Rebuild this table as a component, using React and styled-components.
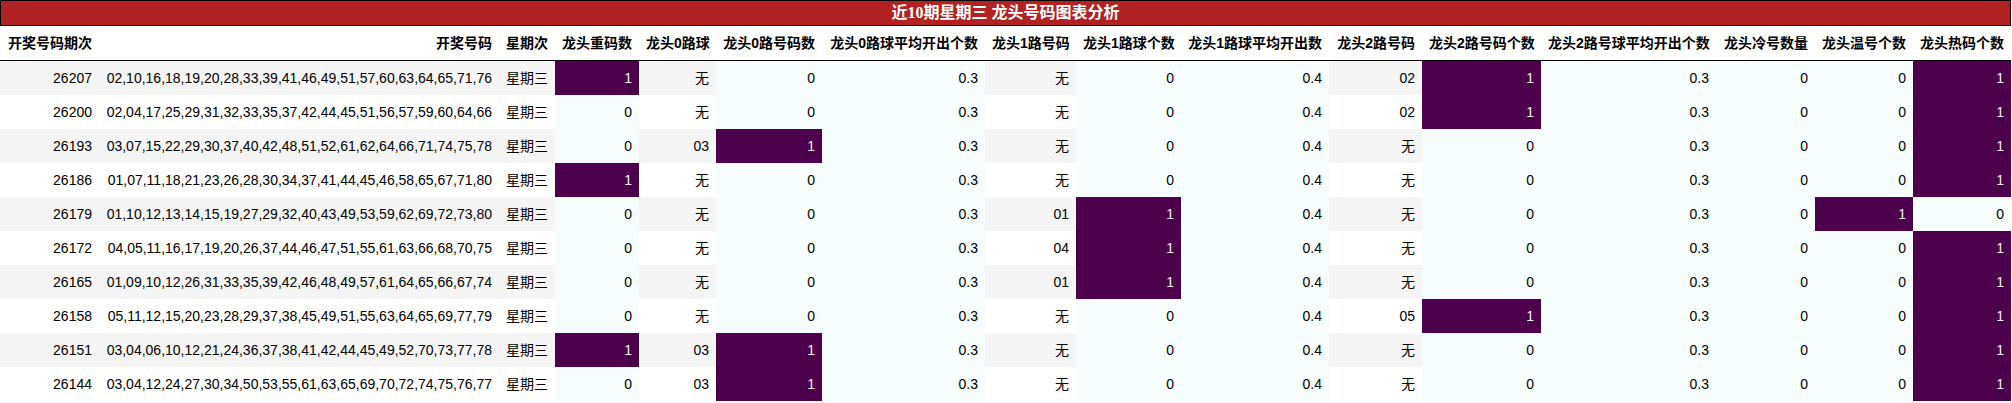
import React from "react";
import styled, { createGlobalStyle } from "styled-components";

const GlobalStyle = createGlobalStyle`
  html, body {
    margin: 0;
    padding: 0;
    background: #ffffff;
  }
  body {
    font-family: "Liberation Sans", "Noto Sans CJK SC", sans-serif;
  }
`;

// BuPu colour scale, low -> high
const BUPU = [
  "#f7fcfd", "#e0ecf4", "#bfd3e6", "#9ebcda", "#8c96c6",
  "#8c6bb1", "#88419d", "#810f7c", "#4d004b",
];

const columns = [
  { title: "开奖号码期次", width: 99 },
  { title: "开奖号码", width: 400 },
  { title: "星期次", width: 56 },
  { title: "龙头重码数", width: 84, grad: true },
  { title: "龙头0路球", width: 77 },
  { title: "龙头0路号码数", width: 106, grad: true },
  { title: "龙头0路球平均开出个数", width: 163, grad: true },
  { title: "龙头1路号码", width: 91 },
  { title: "龙头1路球个数", width: 105, grad: true },
  { title: "龙头1路球平均开出数", width: 148, grad: true },
  { title: "龙头2路号码", width: 93 },
  { title: "龙头2路号码个数", width: 119, grad: true },
  { title: "龙头2路号球平均开出个数", width: 175, grad: true },
  { title: "龙头冷号数量", width: 99, grad: true },
  { title: "龙头温号个数", width: 98, grad: true },
  { title: "龙头热码个数", width: 98, grad: true },
];

const rows = [
  ["26207", "02,10,16,18,19,20,28,33,39,41,46,49,51,57,60,63,64,65,71,76", "星期三", 1, "无", 0, 0.3, "无", 0, 0.4, "02", 1, 0.3, 0, 0, 1],
  ["26200", "02,04,17,25,29,31,32,33,35,37,42,44,45,51,56,57,59,60,64,66", "星期三", 0, "无", 0, 0.3, "无", 0, 0.4, "02", 1, 0.3, 0, 0, 1],
  ["26193", "03,07,15,22,29,30,37,40,42,48,51,52,61,62,64,66,71,74,75,78", "星期三", 0, "03", 1, 0.3, "无", 0, 0.4, "无", 0, 0.3, 0, 0, 1],
  ["26186", "01,07,11,18,21,23,26,28,30,34,37,41,44,45,46,58,65,67,71,80", "星期三", 1, "无", 0, 0.3, "无", 0, 0.4, "无", 0, 0.3, 0, 0, 1],
  ["26179", "01,10,12,13,14,15,19,27,29,32,40,43,49,53,59,62,69,72,73,80", "星期三", 0, "无", 0, 0.3, "01", 1, 0.4, "无", 0, 0.3, 0, 1, 0],
  ["26172", "04,05,11,16,17,19,20,26,37,44,46,47,51,55,61,63,66,68,70,75", "星期三", 0, "无", 0, 0.3, "04", 1, 0.4, "无", 0, 0.3, 0, 0, 1],
  ["26165", "01,09,10,12,26,31,33,35,39,42,46,48,49,57,61,64,65,66,67,74", "星期三", 0, "无", 0, 0.3, "01", 1, 0.4, "无", 0, 0.3, 0, 0, 1],
  ["26158", "05,11,12,15,20,23,28,29,37,38,45,49,51,55,63,64,65,69,77,79", "星期三", 0, "无", 0, 0.3, "无", 0, 0.4, "05", 1, 0.3, 0, 0, 1],
  ["26151", "03,04,06,10,12,21,24,36,37,38,41,42,44,45,49,52,70,73,77,78", "星期三", 1, "03", 1, 0.3, "无", 0, 0.4, "无", 0, 0.3, 0, 0, 1],
  ["26144", "03,04,12,24,27,30,34,50,53,55,61,63,65,69,70,72,74,75,76,77", "星期三", 0, "03", 1, 0.3, "无", 0, 0.4, "无", 0, 0.3, 0, 0, 1],
];

const ranges = columns.map((col, ci) => {
  if (!col.grad) return null;
  const vals = rows.map((r) => r[ci]);
  return [Math.min(...vals), Math.max(...vals)];
});

const gradColor = (value, ci) => {
  const [lo, hi] = ranges[ci];
  const t = hi === lo ? 0 : (value - lo) / (hi - lo);
  return BUPU[Math.round(t * (BUPU.length - 1))];
};

const Wrapper = styled.div`
  width: 2011px;
`;

const Caption = styled.div`
  box-sizing: border-box;
  height: 26px;
  border: 1px solid #000000;
  background: #b22222;
  color: #ffffff;
  font-family: "Liberation Serif", "Noto Sans CJK SC", serif;
  font-weight: bold;
  font-size: 16px;
  line-height: 24px;
  text-align: center;
`;

const Table = styled.table`
  width: 2011px;
  table-layout: fixed;
  border-collapse: collapse;
  border-spacing: 0;
  font-size: 14px;
  color: #000000;
`;

const HeadRow = styled.tr`
  border-bottom: 1px solid #000000;
`;

const HeadCell = styled.th`
  padding: 7px 7px;
  line-height: 20px;
  font-weight: bold;
  text-align: right;
  white-space: nowrap;
  background: #ffffff;
`;

const Row = styled.tr`
  background: ${(p) => (p.$striped ? "#f5f5f5" : "#ffffff")};
`;

const Cell = styled.td`
  padding: 7px 7px;
  line-height: 20px;
  text-align: right;
  white-space: nowrap;
  background: ${(p) => p.$bg || "transparent"};
  color: ${(p) => (p.$dark ? "#f1f1f1" : "#000000")};
`;

export default function App() {
  return (
    <>
      <GlobalStyle />
      <Wrapper>
        <Caption>近10期星期三 龙头号码图表分析</Caption>
        <Table>
          <colgroup>
            {columns.map((c) => (
              <col key={c.title} style={{ width: c.width }} />
            ))}
          </colgroup>
          <thead>
            <HeadRow>
              {columns.map((c) => (
                <HeadCell key={c.title}>{c.title}</HeadCell>
              ))}
            </HeadRow>
          </thead>
          <tbody>
            {rows.map((r, ri) => (
              <Row key={r[0]} $striped={ri % 2 === 0}>
                {r.map((v, ci) => {
                  if (!columns[ci].grad) return <Cell key={ci}>{v}</Cell>;
                  const bg = gradColor(v, ci);
                  return (
                    <Cell key={ci} $bg={bg} $dark={bg === BUPU[BUPU.length - 1]}>
                      {v}
                    </Cell>
                  );
                })}
              </Row>
            ))}
          </tbody>
        </Table>
      </Wrapper>
    </>
  );
}
